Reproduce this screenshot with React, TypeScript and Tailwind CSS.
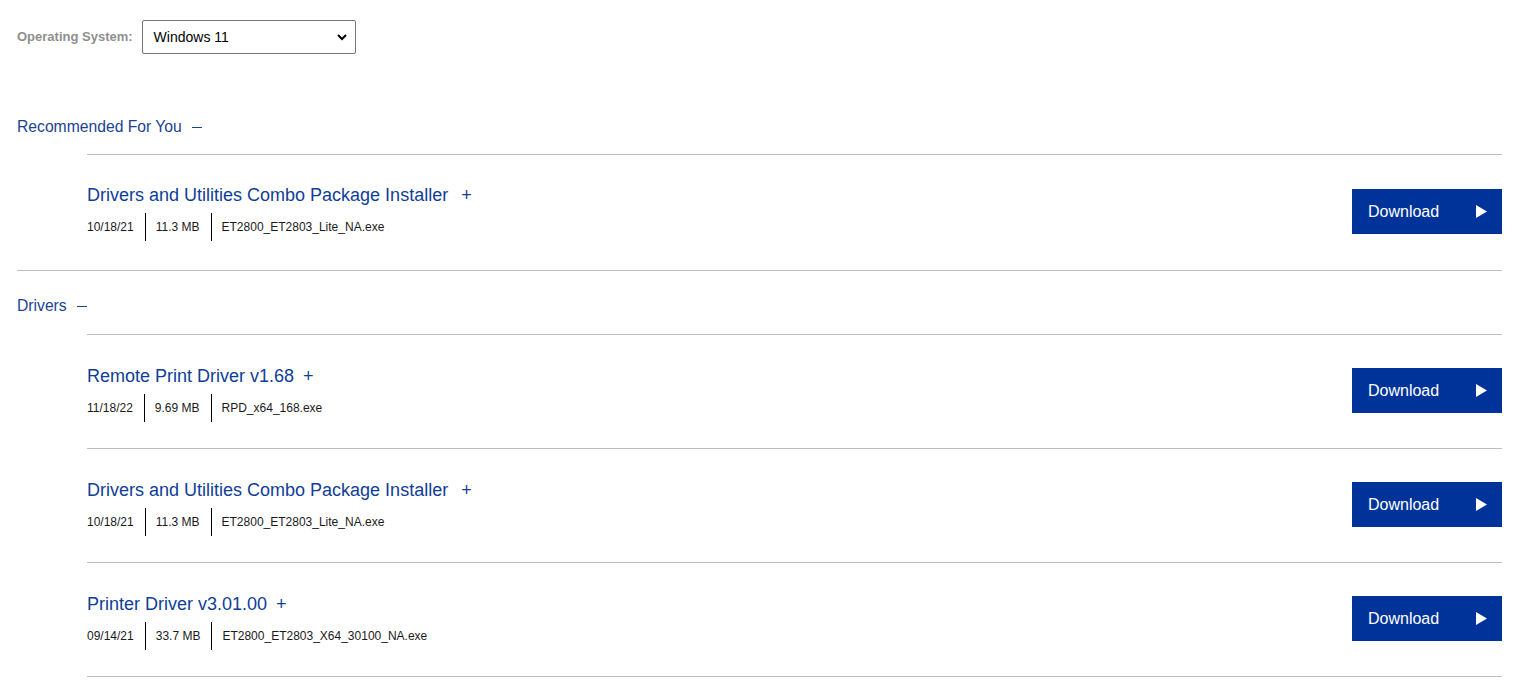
type Download = {
  title: string
  date: string
  size: string
  file: string
}

const recommended: Download[] = [
  {
    title: "Drivers and Utilities Combo Package Installer",
    date: "10/18/21",
    size: "11.3 MB",
    file: "ET2800_ET2803_Lite_NA.exe",
  },
]

const drivers: Download[] = [
  {
    title: "Remote Print Driver v1.68",
    date: "11/18/22",
    size: "9.69 MB",
    file: "RPD_x64_168.exe",
  },
  {
    title: "Drivers and Utilities Combo Package Installer",
    date: "10/18/21",
    size: "11.3 MB",
    file: "ET2800_ET2803_Lite_NA.exe",
  },
  {
    title: "Printer Driver v3.01.00",
    date: "09/14/21",
    size: "33.7 MB",
    file: "ET2800_ET2803_X64_30100_NA.exe",
  },
]

function DownloadRow({ item, roomy }: { item: Download; roomy?: boolean }) {
  const wide = item.title.includes("Combo")
  return (
    <div
      className={`flex items-start justify-between border-t border-[#c2beb9] ${
        roomy ? "pt-[29px] pb-[29px]" : "pt-[30px] pb-[26px]"
      }`}
    >
      <div className="flex flex-col">
        {/* Title */}
        <div className="flex items-center text-[18px] leading-[22px] text-[#0f3e98]">
          <span>{item.title}</span>
          <span className={wide ? "ml-[13px]" : "ml-[9px]"}>+</span>
        </div>

        {/* Meta */}
        <div className="mt-[7px] flex items-center text-[12px] text-[#1a1a1a]">
          <span className="flex h-[28px] items-center">{item.date}</span>
          <span className="ml-[11px] flex h-[28px] items-center border-l border-black pl-[10px]">
            {item.size}
          </span>
          <span className="ml-[11px] flex h-[28px] items-center border-l border-black pl-[10px]">
            {item.file}
          </span>
        </div>
      </div>

      <button
        className={`flex h-[45px] w-[150px] items-center justify-between bg-[#003399] pl-[16px] pr-[15px] text-[16px] text-white ${
          roomy ? "mt-[5px]" : "mt-[3px]"
        }`}
      >
        <span>Download</span>
        <svg width="11" height="13" viewBox="0 0 11 13">
          <path d="M0 0 L11 6.5 L0 13 Z" fill="white" />
        </svg>
      </button>
    </div>
  )
}

function SectionHeader({ label, first }: { label: string; first?: boolean }) {
  return (
    <div
      className={`flex items-center pt-[26px] text-[15.7px] leading-[18px] text-[#1b4394] ${
        first ? "pb-[18px]" : "pb-[19px]"
      }`}
    >
      <span>{label}</span>
      <span className="ml-[10px] inline-block h-px w-[10px] bg-[#1b4394]" />
    </div>
  )
}

export default function App() {
  return (
    <main
      className="min-h-screen bg-white pl-[17px] pr-[38px] pt-[20px]"
      style={{ fontFamily: '"Liberation Sans", Arial, sans-serif' }}
    >
      {/* OS selector */}
      <div className="flex items-center">
        <span className="text-[13px] font-bold text-[#8f8f8f]">Operating System:</span>
        <div className="ml-[9px] flex h-[34px] w-[214px] items-center justify-between rounded-[2px] border border-[#767676] pl-[11px] pr-[8px] text-[14px] text-black">
          <span>Windows 11</span>
          <svg width="10" height="7" viewBox="0 0 10 7">
            <path d="M1 1 L5 5 L9 1" fill="none" stroke="black" strokeWidth="2" />
          </svg>
        </div>
      </div>

      {/* Recommended */}
      <section className="mt-[38px] border-b border-[#c2beb9]">
        <SectionHeader label="Recommended For You" first />
        <div className="ml-[70px]">
          {recommended.map((item) => (
            <DownloadRow key={item.file} item={item} roomy />
          ))}
        </div>
      </section>

      {/* Drivers */}
      <section>
        <SectionHeader label="Drivers" />
        <div className="ml-[70px] border-b border-[#c2beb9]">
          {drivers.map((item) => (
            <DownloadRow key={item.file} item={item} />
          ))}
        </div>
      </section>
    </main>
  )
}
